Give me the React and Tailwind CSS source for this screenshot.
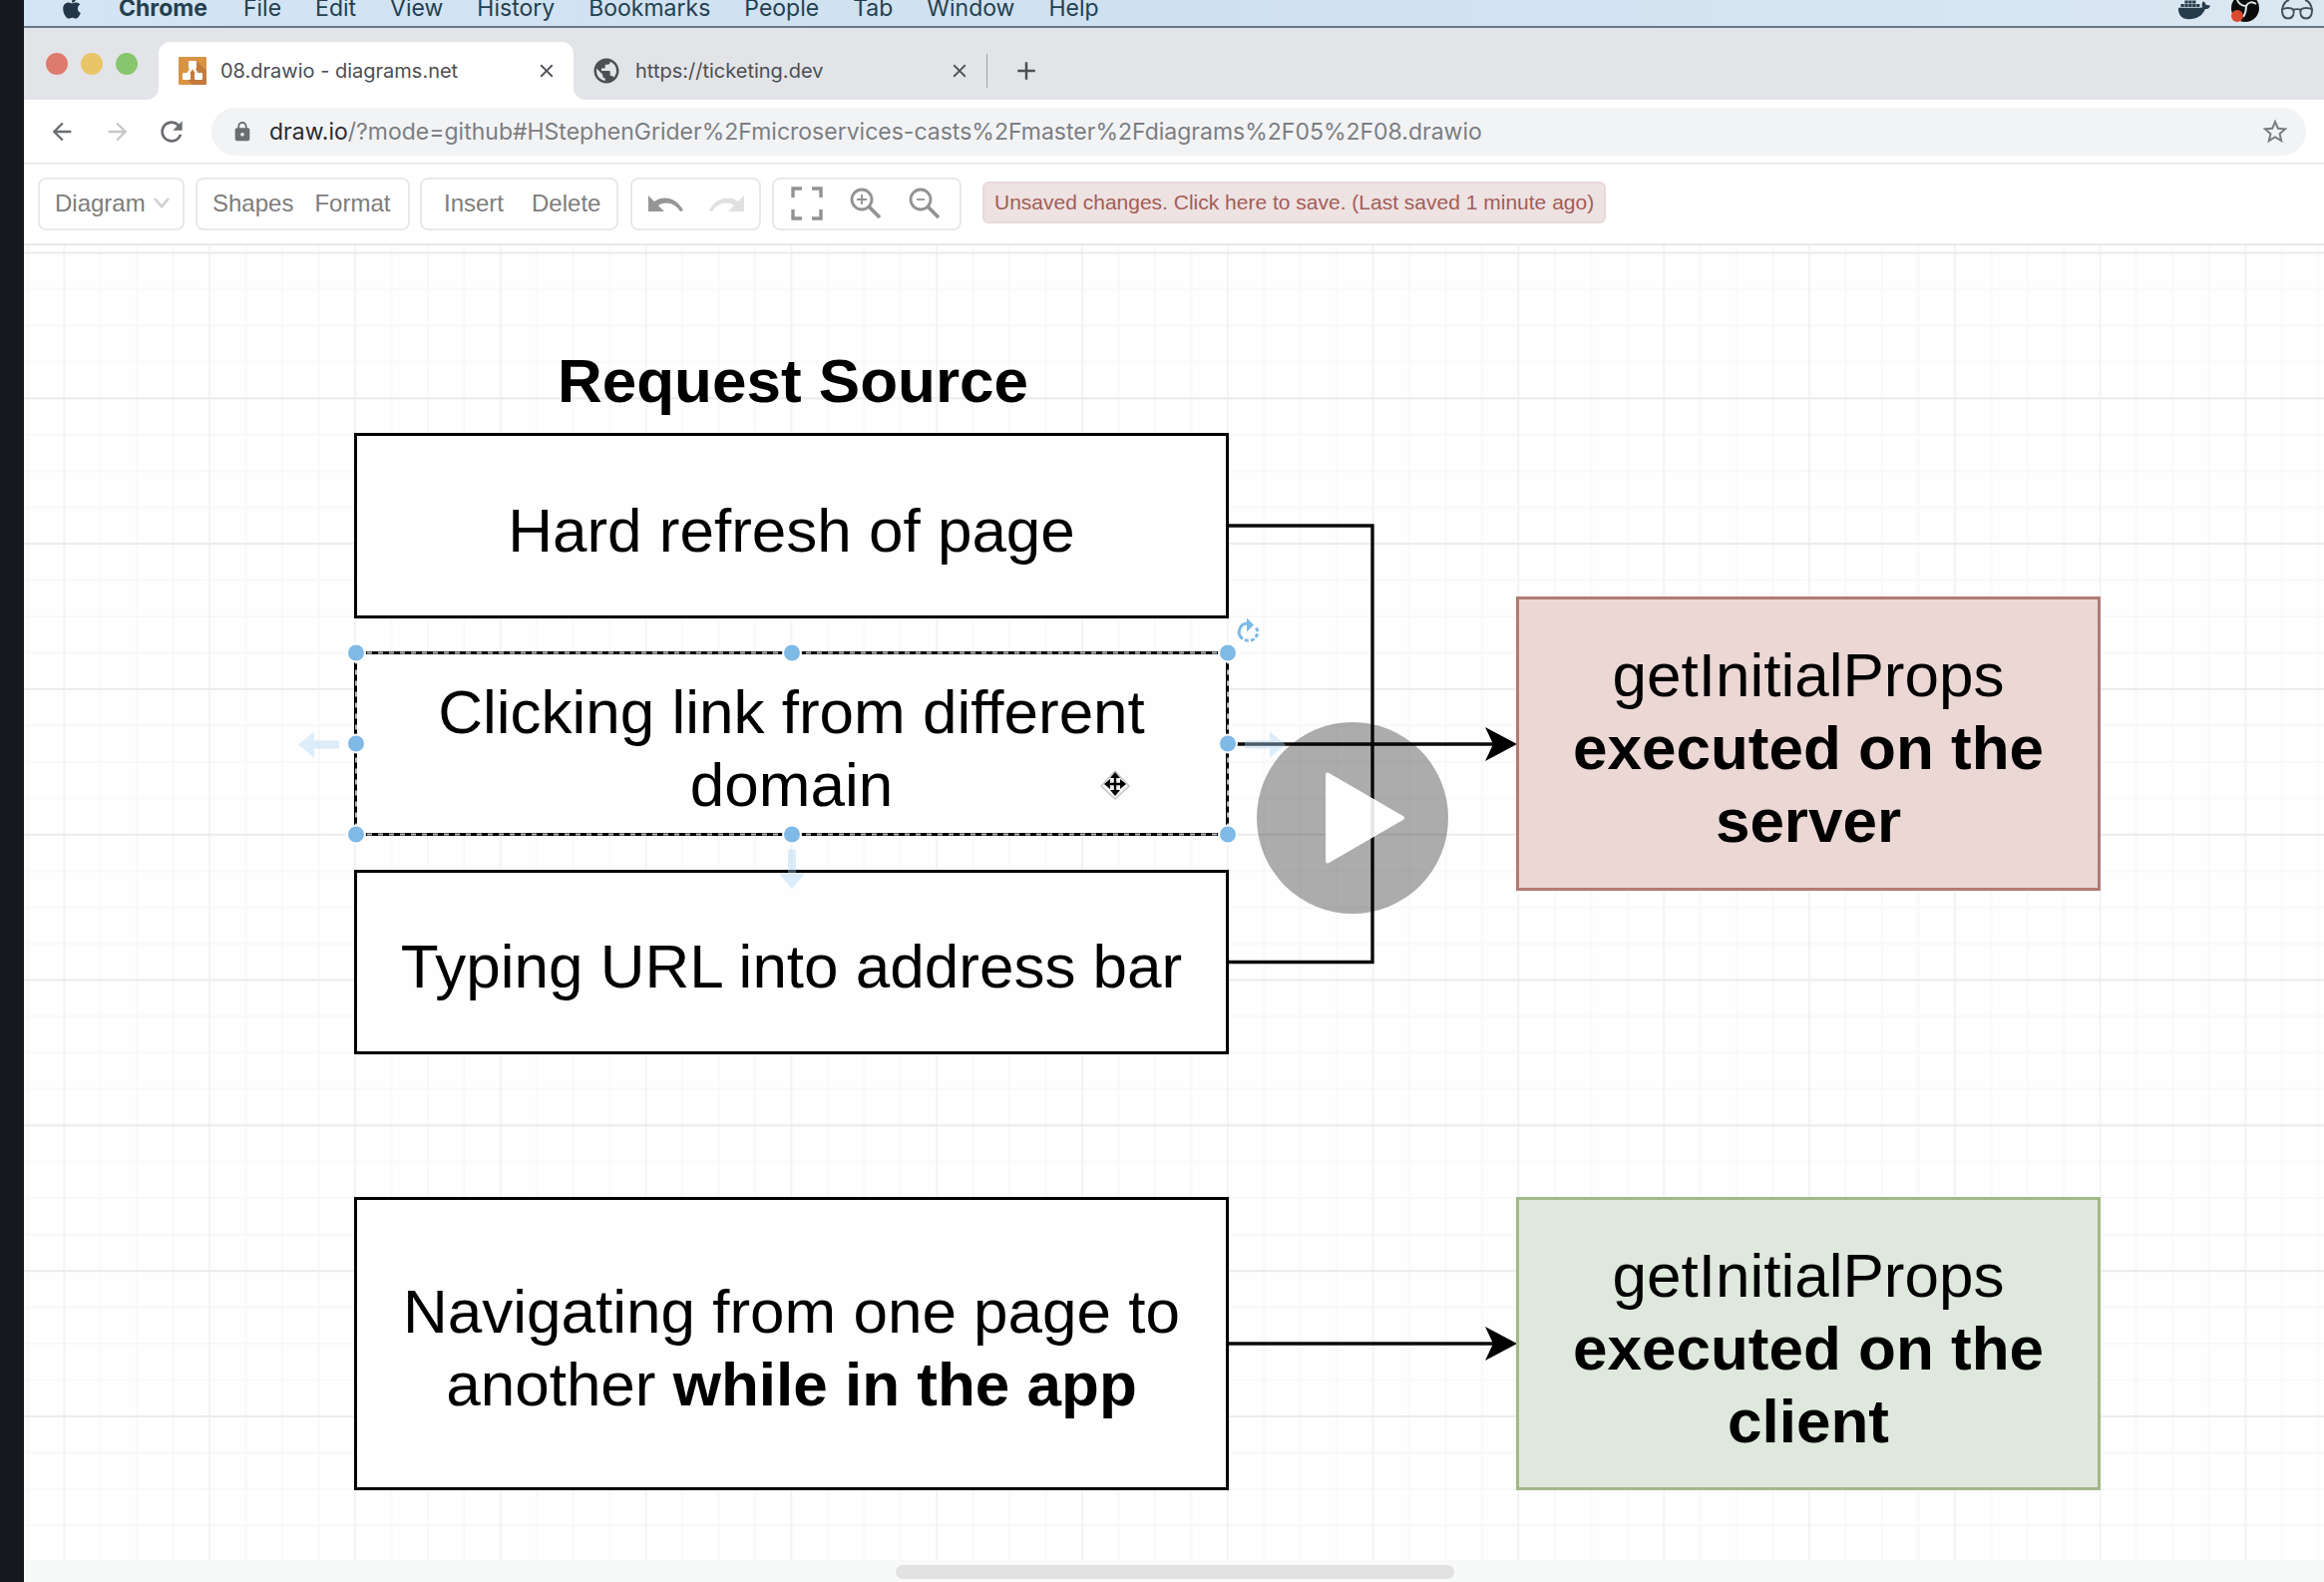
import React from "react";
import { FaApple, FaDocker } from "react-icons/fa";
import { MdArrowBack, MdArrowForward, MdClose, MdLock, MdPublic, MdRefresh, MdStarBorder, MdAdd } from "react-icons/md";

const menus = ["File", "Edit", "View", "History", "Bookmarks", "People", "Tab", "Window", "Help"];

function ObsIcon() {
  return (
    <svg viewBox="0 0 30 30" className="size-[30px]" aria-hidden="true">
      <circle cx="15" cy="15" r="14" fill="#0b0b0b" />
      <path d="M7 7c2 5 5 6 9 6M16 13c2-4 6-5 10-2M16 13c0 5-1 8-3 11" fill="none" stroke="#dfe6ea" strokeWidth="2" />
      <circle cx="7" cy="23" r="6" fill="#d84b32" />
    </svg>
  );
}

function GlassesIcon() {
  return (
    <svg viewBox="0 0 34 30" className="h-[30px] w-[34px]" fill="none" stroke="#42515c" strokeWidth="2" aria-hidden="true">
      <path d="M2 16.500c3-2 9-2 11 0c1 2 1 4 0 6c-2 4-8 4-10 0c-1-2-1-4-1-6z" />
      <path d="M32 16.500c-3-2-9-2-11 0c-1 2-1 4 0 6c2 4 8 4 10 0c1-2 1-4 1-6z" />
      <path d="M13 17c2-1 6-1 8 0M2 17C3 11 5 8 9 7M32 17c-1-6-3-9-7-10" />
    </svg>
  );
}

function MenuBar() {
  return (
    <header className="h-7 border-b-2 border-[#657789] bg-linear-to-r from-[#d3e5f4] via-[#cfe0f0] to-[#dbe8f2] font-[Inter,sans-serif] text-[#24404f]">
      <div className="flex h-4 items-center pr-2.5 pl-9">
        <FaApple className="mr-[35px] size-6 text-[#22384a]" />
        <nav className="flex items-center gap-[34px] text-[23px] leading-4">
          <button className="mr-0.5 font-bold">Chrome</button>
          {menus.map((m) => (
            <button key={m}>{m}</button>
          ))}
        </nav>
        <div className="ml-auto flex items-center gap-5">
          <FaDocker className="size-8 text-[#263c4b]" />
          <ObsIcon />
          <GlassesIcon />
        </div>
      </div>
    </header>
  );
}

function DrawioLogo() {
  return (
    <svg viewBox="0 0 28 28" className="size-7 shrink-0" aria-hidden="true">
      <rect width="28" height="28" rx="1" fill="#d99344" />
      <path d="M18 4l10 10v14H14L8 22l6-10z" fill="#c47b3c" />
      <path d="M14 10L8 19M14 10l6 9" stroke="#fff" strokeWidth="2.4" />
      <rect x="10" y="4" width="8" height="8" rx="1" fill="#fff" />
      <rect x="4" y="16" width="8" height="7" rx="1" fill="#fff" />
      <rect x="16" y="16" width="8" height="7" rx="1" fill="#fff" />
    </svg>
  );
}

function TabStrip() {
  return (
    <div className="flex h-[72px] items-end bg-[#e3e4e8] font-[Inter,sans-serif] text-xl text-[#4c4f53]">
      <div className="flex w-[135px] items-center gap-[13px] self-stretch pl-[22px]">
        <button aria-label="Close window" className="size-[22px] rounded-full bg-[#dd7b6f]" />
        <button aria-label="Minimize window" className="size-[22px] rounded-full bg-[#eac567]" />
        <button aria-label="Zoom window" className="size-[22px] rounded-full bg-[#87c66c]" />
      </div>
      <div className="relative flex h-[58px] w-[416px] items-center rounded-t-xl bg-white pr-4 pl-5">
        <DrawioLogo />
        <span className="ml-3.5">08.drawio - diagrams.net</span>
        <button aria-label="Close tab" className="ml-auto">
          <MdClose className="size-[22px]" />
        </button>
        <svg viewBox="0 0 12 12" className="absolute bottom-0 -left-3 size-3" aria-hidden="true">
          <path d="M12 0v12H0A12 12 0 0 0 12 0z" fill="#fff" />
        </svg>
        <svg viewBox="0 0 12 12" className="absolute -right-3 bottom-0 size-3" aria-hidden="true">
          <path d="M0 0v12h12A12 12 0 0 1 0 0z" fill="#fff" />
        </svg>
      </div>
      <div className="flex h-[58px] w-[414px] items-center pr-4 pl-[18px]">
        <MdPublic className="size-[30px]" />
        <span className="ml-3.5">https://ticketing.dev</span>
        <button aria-label="Close tab" className="ml-auto">
          <MdClose className="size-[22px]" />
        </button>
      </div>
      <div className="mb-3 h-[34px] w-px bg-[#9fa1a5]" />
      <button aria-label="New tab" className="mb-3.5 ml-6">
        <MdAdd className="size-[30px]" />
      </button>
    </div>
  );
}

function AddressBar() {
  return (
    <div className="flex h-[65px] items-center border-b-2 border-[#ebebec] bg-white pr-[18px] pl-6 text-[#6a6d71]">
      <button aria-label="Back"><MdArrowBack className="size-7" /></button>
      <button aria-label="Forward" className="ml-7 text-[#c6c7c9]"><MdArrowForward className="size-7" /></button>
      <button aria-label="Reload" className="ml-6"><MdRefresh className="size-8" /></button>
      <div className="ml-6 flex h-12 flex-1 items-center rounded-full bg-[#f2f3f5] pr-4 pl-5">
        <MdLock className="size-[22px]" />
        <a href="#url" className="ml-4 pt-0.5 font-[Inter,sans-serif] text-[23px] text-[#7b7e82]">
          <span className="text-[#2b2d30]">draw.io</span>
          /?mode=github#HStephenGrider%2Fmicroservices-casts%2Fmaster%2Fdiagrams%2F05%2F08.drawio
        </a>
        <button aria-label="Bookmark this page" className="ml-auto"><MdStarBorder className="size-[30px] text-[#7a7d81]" /></button>
      </div>
    </div>
  );
}

function Group({ className, children }) {
  return (
    <div className={"flex h-[53px] items-center rounded-lg border-2 border-[#e9e9e9] bg-white pb-0.5 " + className}>{children}</div>
  );
}

function UndoIcon({ flip }) {
  return (
    <svg viewBox="0 0 36 18" className={flip ? "h-[18px] w-9 -scale-x-100" : "h-[18px] w-9"} aria-hidden="true">
      <path d="M0 1v16h16l-6-6c8-5 17-2 22 6l3-1C29 4 16 0 6 7z" fill="currentColor" />
    </svg>
  );
}

function Magnifier({ plus }) {
  return (
    <svg viewBox="0 0 32 32" className="size-8" fill="none" stroke="currentColor" aria-hidden="true">
      <circle cx="12" cy="12" r="10" strokeWidth="2.8" />
      <path d="M19 19l11 11" strokeWidth="3.8" />
      <path d={plus ? "M7 12h10M12 7v10" : "M8 12h8"} strokeWidth="1.8" />
    </svg>
  );
}

function DrawioToolbar() {
  return (
    <div className="flex h-[81px] items-center border-b-2 border-[#e9e9e9] bg-white pl-3.5 text-2xl text-[#7d7d7d]">
      <Group className="w-[147px] pl-[15px]">
        <button className="flex items-center gap-2">
          Diagram
          <svg viewBox="0 0 16 12" className="h-3 w-4" fill="none" stroke="#cfcfcf" strokeWidth="2.6" aria-hidden="true">
            <path d="M1 1l7 8 7-8" />
          </svg>
        </button>
      </Group>
      <Group className="ml-[11px] w-[215px] gap-[21px] pl-[15px]">
        <button>Shapes</button>
        <button>Format</button>
      </Group>
      <Group className="ml-2.5 w-[199px] gap-7 pl-[22px]">
        <button>Insert</button>
        <button>Delete</button>
      </Group>
      <Group className="ml-3 w-[131px] justify-center gap-6">
        <button aria-label="Undo" className="text-[#959595]"><UndoIcon /></button>
        <button aria-label="Redo" className="text-[#e0e0e0]"><UndoIcon flip /></button>
      </Group>
      <Group className="ml-[11px] w-[190px] gap-[27px] pl-[17px] text-[#929292]">
        <button aria-label="Fit page">
          <svg viewBox="0 0 32 34" className="h-[34px] w-8" fill="none" stroke="currentColor" strokeWidth="3.4" aria-hidden="true">
            <path d="M2 11V2h9M21 2h9v9M30 23v9h-9M11 32H2v-9" />
          </svg>
        </button>
        <button aria-label="Zoom in"><Magnifier plus /></button>
        <button aria-label="Zoom out"><Magnifier /></button>
      </Group>
      <button className="mb-1 ml-[21px] h-[42px] rounded-md border-2 border-[#e9d9da] bg-[#eee2e2] px-2.5 text-[21px] leading-9 text-[#a35d57]">
        Unsaved changes. Click here to save. (Last saved 1 minute ago)
      </button>
    </div>
  );
}

/* Minor step 36.45, major step 145.8, aligned with the edges of the nodes. */
function Grid() {
  return (
    <svg className="absolute inset-0 size-full" aria-hidden="true">
      <defs>
        <pattern id="grid" width="145.8" height="145.8" x="39.4" y="6.5" patternUnits="userSpaceOnUse">
          <path d="M37.450 0v145.8M73.9 0v145.8M110.350 0v145.8M0 37.450h145.8M0 73.9h145.8M0 110.350h145.8" stroke="#f8f8f8" strokeWidth="2" />
          <path d="M1 0v145.8" stroke="#f3f3f3" strokeWidth="2" />
          <path d="M0 1h145.8" stroke="#ebebeb" strokeWidth="2" />
        </pattern>
      </defs>
      <rect width="100%" height="100%" fill="url(#grid)" />
    </svg>
  );
}

function Connectors() {
  return (
    <svg className="absolute top-0 left-0 h-[1320px] w-[2100px]" aria-hidden="true">
      <g fill="none" stroke="#0a0a0a" strokeWidth="3.4">
        <path d="M1207 281H1352V718.500H1207" />
        <path d="M1207 500H1475" />
        <path d="M1207 1101H1475" />
      </g>
      <path d="M1497 500l-32-17 8 17-8 17z" />
      <path d="M1497 1101l-32-17 8 17-8 17z" />
    </svg>
  );
}

function Node({ className, children }) {
  return (
    <div className={"absolute flex flex-col items-center justify-center border-3 pt-2 text-center text-[62px] leading-[73px] whitespace-nowrap text-black " + className}>
      {children}
    </div>
  );
}

function Selection() {
  const xs = [0, 437, 874];
  const ys = [0, 91, 182];
  const points = [];
  for (const x of xs) for (const y of ys) if (!(x === 437 && y === 91)) points.push([x, y]);
  return (
    <svg className="absolute top-[340px] left-[260px] h-[330px] w-[1040px]" aria-hidden="true">
      <g transform="translate(73 68.5)">
        <rect width="874" height="182" fill="none" stroke="#b9b9b9" strokeWidth="2" strokeDasharray="5 6" />
        {points.map(([x, y]) => (
          <circle key={x + "-" + y} cx={x} cy={y} r="9" fill="#7fb9e6" stroke="#fff" strokeWidth="2" />
        ))}
        <g fill="#a9d3f2" fillOpacity="0.4">
          <path d="M-58 92l16-13v9h25v8h-25v9z" />
          <path d="M932 92l-16-13v9h-25v8h25v9z" />
          <path d="M437 237l-13-16h9v-24h8v24h9z" />
        </g>
        <g fill="none" stroke="#7fb9e6" strokeWidth="3">
          <path d="M894 -29.500A8.500 8.500 0 0 0 889 -14" />
          <path d="M891 -13.300A8.500 8.500 0 0 0 902.500 -25" strokeDasharray="4 2" />
        </g>
        <path d="M893 -35l7 7-7 7z" fill="#7fb9e6" />
      </g>
    </svg>
  );
}

function MoveCursor() {
  return (
    <svg viewBox="0 0 30 30" className="absolute top-[526px] left-[1079px] size-[30px]" aria-hidden="true">
      <path d="M15 1l14 15-14 13L1 16z" fill="#f4f4f4" stroke="#c8c8c8" strokeWidth="1.6" />
      <path d="M15 5v18M6 14h18" stroke="#000" strokeWidth="2.4" />
      <path d="M15 2l5 6H10zM15 26l5-6H10zM4 14l6-5v10zM26 14l-6-5v10z" />
    </svg>
  );
}

function Canvas() {
  return (
    <main className="relative min-h-[1318px] flex-1 overflow-hidden bg-[#fefefe]">
      <Grid />
      <h1 className="absolute top-[99px] left-[332px] w-[878px] text-center text-[62px] leading-[73px] font-bold text-black">Request Source</h1>
      <Connectors />
      <Node className="top-[188px] left-[331px] h-[186px] w-[877px] border-black bg-[#fefefe]">
        <p>Hard refresh of page</p>
      </Node>
      <Node className="top-[407px] left-[331px] h-[185px] w-[877px] border-black bg-[#fefefe]">
        <p>Clicking link from different</p>
        <p>domain</p>
      </Node>
      <Node className="top-[626px] left-[331px] h-[185px] w-[877px] border-black bg-[#fefefe]">
        <p>Typing URL into address bar</p>
      </Node>
      <Node className="top-[954px] left-[331px] h-[294px] w-[877px] border-black bg-[#fefefe]">
        <p>Navigating from one page to</p>
        <p>another <b>while in the app</b></p>
      </Node>
      <Node className="top-[352px] left-[1496px] h-[295px] w-[586px] border-[#b27a74] bg-[#ebd7d4]">
        <p>getInitialProps</p>
        <b>executed on the</b>
        <b>server</b>
      </Node>
      <Node className="top-[954px] left-[1496px] h-[294px] w-[586px] border-[#a3b888] bg-[#dfe8dd]">
        <p>getInitialProps</p>
        <b>executed on the</b>
        <b>client</b>
      </Node>
      <Selection />
      <MoveCursor />
      <button aria-label="Play video" className="absolute top-[478px] left-[1236px] size-48 rounded-full">
        <svg viewBox="0 0 192 192" className="size-48" aria-hidden="true">
          <circle cx="96" cy="96" r="96" fill="#000" fillOpacity="0.32" />
          <path d="M71 52.500L146 96 71 139.500z" fill="#fff" stroke="#fff" strokeWidth="4" strokeLinejoin="round" />
          <path d="M116 77v38" stroke="#e6e6e6" strokeWidth="3.6" />
        </svg>
      </button>
    </main>
  );
}

export default function App() {
  return (
    <div className="flex min-h-screen flex-col border-l-24 border-[#15191e] bg-white font-['Liberation_Sans',Arial,sans-serif]">
      <MenuBar />
      <TabStrip />
      <AddressBar />
      <DrawioToolbar />
      <Canvas />
      <div className="flex h-[22px] items-center bg-[#f8faf9] pt-0.5 pl-[37.9%]">
        <div className="h-3.5 w-[39.1%] rounded-full bg-[#e2e2e2]" />
      </div>
    </div>
  );
}
